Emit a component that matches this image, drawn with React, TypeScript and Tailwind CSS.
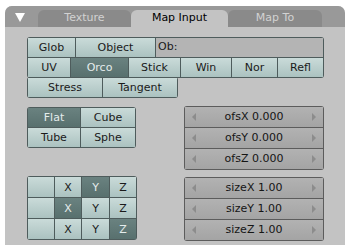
import React from 'react';

const font = { fontFamily: '"DejaVu Sans", "Liberation Sans", sans-serif' };

type Btn = { label: string; w: number; on?: boolean };

const Toggle: React.FC<{ label: string; w: number; on?: boolean }> = ({ label, w, on }) => (
  <div
    style={{ width: w }}
    className={`flex shrink-0 items-center justify-center text-[11px] leading-none ${
      on
        ? 'bg-gradient-to-b from-[#6a8280] to-[#58706e] text-[#e4ecec]'
        : 'bg-gradient-to-b from-[#cadbd9] to-[#abc2c0] text-[#1a1a1a]'
    }`}
  >
    {label}
  </div>
);

const ButtonRow: React.FC<{ items: Btn[]; h?: number; className?: string }> = ({ items, h = 21, className = '' }) => (
  <div style={{ height: h }} className={`flex gap-px rounded-[3px] bg-[#4e5c5c] p-px w-fit overflow-hidden ${className}`}>
    {items.map((b, i) => (
      <Toggle key={i} {...b} />
    ))}
  </div>
);

const NumField: React.FC<{ label: string }> = ({ label }) => (
  <div className="relative flex h-[20px] items-center justify-center bg-gradient-to-b from-[#b2b2b2] to-[#a4a4a4] text-[11px] text-[#151515]">
    <span className="absolute left-[7px] top-[6px] h-0 w-0 border-y-[4px] border-r-[4px] border-y-transparent border-r-[#8c8c8c]" />
    {label}
    <span className="absolute right-[7px] top-[6px] h-0 w-0 border-y-[4px] border-l-[4px] border-y-transparent border-l-[#8c8c8c]" />
  </div>
);

const NumGroup: React.FC<{ labels: string[] }> = ({ labels }) => (
  <div className="flex w-[140px] flex-col gap-px rounded-[3px] bg-[#5c5c5c] p-px">
    {labels.map((l) => (
      <NumField key={l} label={l} />
    ))}
  </div>
);

export default function App() {
  return (
    <div style={font} className="h-[251px] w-[350px] bg-white pl-[5px] pt-[6px]">
      <div className="flex h-[239px] w-[340px] flex-col overflow-hidden rounded-t-[7px] bg-[#c3c3c3]">
        {/* header with tabs */}
        <div className="flex h-[21px] items-end bg-[#999999] pl-[10px]">
          <div className="mb-[5px] mr-[13px] h-0 w-0 border-x-[5px] border-t-[9px] border-x-transparent border-t-white" />
          <div className="flex h-[17px] w-[93px] items-center justify-center rounded-t-[6px] bg-[#8a8a8a] text-[11px] text-[#d2d2d2]">
            Texture
          </div>
          <div className="flex h-[17px] w-[97px] items-center justify-center rounded-t-[6px] bg-[#c3c3c3] text-[11px] text-black">
            Map Input
          </div>
          <div className="flex h-[17px] w-[94px] items-center justify-center rounded-t-[6px] bg-[#8a8a8a] text-[11px] text-[#d2d2d2]">
            Map To
          </div>
        </div>

        {/* body */}
        <div className="flex flex-col pl-[22px] pt-[10px]">
          <div className="flex h-[21px] w-[297px] gap-px rounded-t-[3px] bg-[#4e5c5c] p-px">
            <Toggle label="Glob" w={47} />
            <Toggle label="Object" w={79} />
            <div className="flex flex-1 items-center bg-[#b4b4b4] pl-[2px] text-[11px] text-[#1a1a1a]">Ob:</div>
          </div>
          <ButtonRow
            className="-mt-px rounded-t-none"
            items={[
              { label: 'UV', w: 42 },
              { label: 'Orco', w: 57, on: true },
              { label: 'Stick', w: 51 },
              { label: 'Win', w: 50 },
              { label: 'Nor', w: 45 },
              { label: 'Refl', w: 45 },
            ]}
          />
          <ButtonRow
            className="-mt-px"
            items={[
              { label: 'Stress', w: 74 },
              { label: 'Tangent', w: 74 },
            ]}
          />

          <div className="mt-[8px] flex gap-[47px]">
            <div className="flex w-[110px] flex-col pt-px">
              <div className="grid w-[109px] grid-cols-[52px_54px] gap-px rounded-[3px] bg-[#4e5c5c] p-px">
                {[
                  ['Flat', true],
                  ['Cube', false],
                  ['Tube', false],
                  ['Sphe', false],
                ].map(([l, on]) => (
                  <div key={l as string} className="flex h-[19px]">
                    <Toggle label={l as string} w={l === 'Cube' || l === 'Sphe' ? 54 : 52} on={on as boolean} />
                  </div>
                ))}
              </div>
              <div className="mt-[28px] grid w-[110px] grid-cols-[26px_26px_27px_26px] gap-px rounded-[3px] bg-[#4e5c5c] p-px">
                {[
                  ['', 'X', 'Y', 'Z', 2],
                  ['', 'X', 'Y', 'Z', 1],
                  ['', 'X', 'Y', 'Z', 3],
                ].map((row, r) =>
                  [0, 1, 2, 3].map((c) => (
                    <div key={`${r}-${c}`} className="flex h-[20px]">
                      <Toggle label={row[c] as string} w={c === 2 ? 27 : 26} on={row[4] === c} />
                    </div>
                  ))
                )}
              </div>
            </div>

            <div className="flex flex-col gap-[7px]">
              <NumGroup labels={['ofsX 0.000', 'ofsY 0.000', 'ofsZ 0.000']} />
              <NumGroup labels={['sizeX 1.00', 'sizeY 1.00', 'sizeZ 1.00']} />
            </div>
          </div>
        </div>
      </div>
    </div>
  );
}
